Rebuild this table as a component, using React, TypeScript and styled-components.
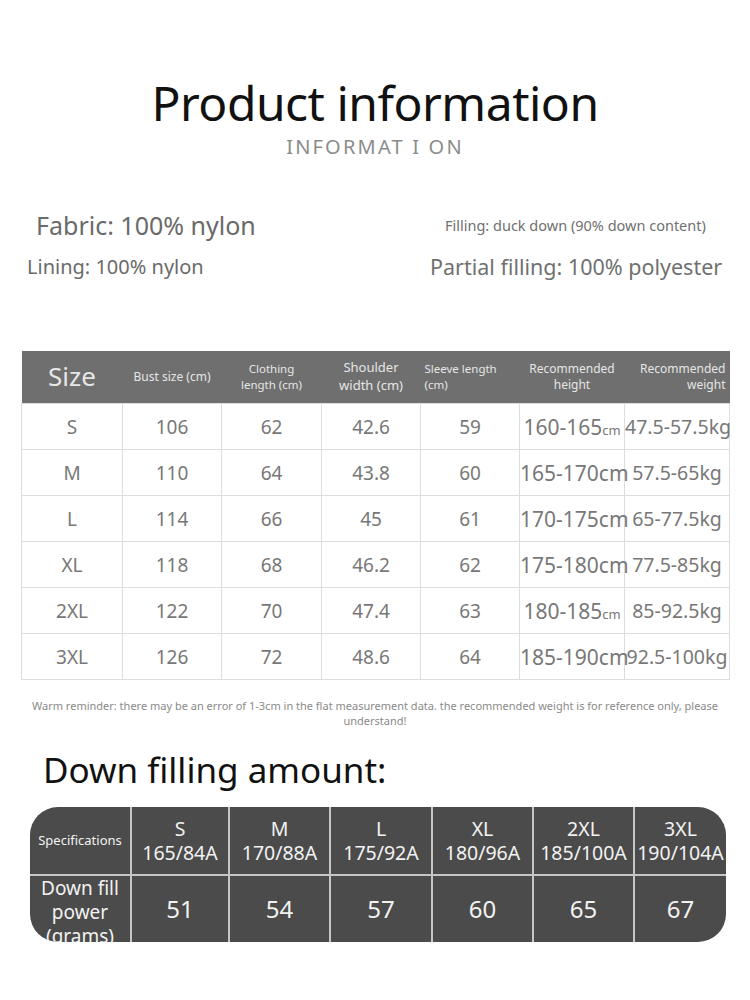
import React from 'react';
import styled, { createGlobalStyle } from 'styled-components';

const GlobalStyle = createGlobalStyle`
  body {
    margin: 0;
    background: #ffffff;
    font-family: 'Noto Sans', 'Open Sans', sans-serif;
  }
`;

const Page = styled.div`
  width: 750px;
  height: 1000px;
  overflow: hidden;
  background: #fff;
`;

const TitleBlock = styled.div`
  padding-top: 74px;
  text-align: center;
`;

const Title = styled.h1`
  margin: 0;
  font-size: 48px;
  line-height: 58px;
  font-weight: 400;
  color: #111;
  letter-spacing: -0.5px;
`;

const SubTitle = styled.div`
  margin-top: 3px;
  font-size: 20px;
  line-height: 24px;
  color: #8c8c8c;
  letter-spacing: 2.2px;
`;

const Materials = styled.div`
  display: grid;
  grid-template-columns: 1fr 1fr;
  row-gap: 18px;
  margin-top: 54px;
`;

const Material = styled.div<{ $size: number; $indent: number; $right?: boolean }>`
  font-size: ${({ $size }) => $size}px;
  line-height: 24px;
  color: ${({ $right }) => ($right ? '#707070' : '#6a6a6a')};
  padding-left: ${({ $indent }) => $indent}px;
  white-space: nowrap;
`;

const SizeTable = styled.table`
  margin: 72px 0 0 21px;
  width: 708px;
  border-collapse: collapse;
  table-layout: fixed;
`;

const HeadCell = styled.th<{ $size: number; $align?: string }>`
  height: 52px;
  padding: 0 4px;
  background: #6f6f6f;
  color: #e6e6e6;
  font-weight: 400;
  font-size: ${({ $size }) => $size}px;
  line-height: 1.35;
  text-align: ${({ $align }) => $align || 'center'};
`;

const BodyCell = styled.td<{ $size: number }>`
  height: 45px;
  padding: 0;
  border: 1px solid #dedede;
  color: #787878;
  font-size: ${({ $size }) => $size}px;
  text-align: center;
  white-space: nowrap;
  overflow: visible;
`;

const Small = styled.span`
  font-size: 13px;
`;

const Reminder = styled.p`
  margin: 18px 20px 0;
  font-size: 11px;
  line-height: 15px;
  color: #8a8a8a;
  text-align: center;
`;

const SectionTitle = styled.h2`
  margin: 19px 0 0 43px;
  font-size: 35px;
  line-height: 46px;
  font-weight: 400;
  color: #111;
`;

const FillGrid = styled.div`
  margin: 14px 0 0 30px;
  width: 696px;
  display: grid;
  grid-template-columns: 100px 98px 101px 102px 101px 101px 93px;
  grid-template-rows: 67px 68px;
  background: #4b4b4b;
  border-radius: 28px;
  overflow: hidden;
`;

const FillCell = styled.div<{ $size: number; $col: number; $row: number }>`
  display: flex;
  flex-direction: column;
  align-items: center;
  justify-content: center;
  text-align: center;
  color: #f2f2f2;
  font-size: ${({ $size }) => $size}px;
  line-height: 23.5px;
  white-space: nowrap;
  overflow: hidden;
  border-left: ${({ $col }) => ($col > 0 ? '2px solid #c6c6c6' : 'none')};
  border-top: ${({ $row }) => ($row > 0 ? '2px solid #c6c6c6' : 'none')};
`;

const ClippedLabel = styled.div`
  align-self: center;
  margin-top: -1px;
  line-height: 24px;
  font-size: 19px;
  height: 66px;
`;

const headers: { text: React.ReactNode; size: number; align?: string }[] = [
  { text: 'Size', size: 26 },
  { text: 'Bust size (cm)', size: 12 },
  { text: <>Clothing<br />length (cm)</>, size: 11.5 },
  { text: <>Shoulder<br />width (cm)</>, size: 13 },
  { text: <>Sleeve length<br />(cm)</>, size: 11.5, align: 'left' },
  { text: <>Recommended<br />height</>, size: 12 },
  { text: <>Recommended<br />weight</>, size: 12, align: 'right' },
];

const colWidths = [101, 99, 100, 99, 99, 105, 105];
const cellSizes = [19, 19, 19, 19, 19, 21, 19.5];

const rows: [string, string, string, string, string, React.ReactNode, string][] = [
  ['S', '106', '62', '42.6', '59', <>160-165<Small>cm</Small></>, '47.5-57.5kg'],
  ['M', '110', '64', '43.8', '60', '165-170cm', '57.5-65kg'],
  ['L', '114', '66', '45', '61', '170-175cm', '65-77.5kg'],
  ['XL', '118', '68', '46.2', '62', '175-180cm', '77.5-85kg'],
  ['2XL', '122', '70', '47.4', '63', <>180-185<Small>cm</Small></>, '85-92.5kg'],
  ['3XL', '126', '72', '48.6', '64', '185-190cm', '92.5-100kg'],
];

const specs = [
  ['S', '165/84A', '51'],
  ['M', '170/88A', '54'],
  ['L', '175/92A', '57'],
  ['XL', '180/96A', '60'],
  ['2XL', '185/100A', '65'],
  ['3XL', '190/104A', '67'],
];

const App = () => (
  <Page>
    <GlobalStyle />
    <TitleBlock>
      <Title>Product information</Title>
      <SubTitle>INFORMAT I ON</SubTitle>
    </TitleBlock>

    <Materials>
      <Material $size={25} $indent={36}>Fabric: 100% nylon</Material>
      <Material $size={14.5} $indent={70} $right>Filling: duck down (90% down content)</Material>
      <Material $size={20} $indent={27}>Lining: 100% nylon</Material>
      <Material $size={21.5} $indent={55} $right>Partial filling: 100% polyester</Material>
    </Materials>

    <SizeTable>
      <colgroup>
        {colWidths.map((w, i) => (
          <col key={i} style={{ width: w }} />
        ))}
      </colgroup>
      <thead>
        <tr>
          {headers.map((h, i) => (
            <HeadCell key={i} $size={h.size} $align={h.align}>
              {h.text}
            </HeadCell>
          ))}
        </tr>
      </thead>
      <tbody>
        {rows.map((r, i) => (
          <tr key={i}>
            {r.map((c, j) => (
              <BodyCell key={j} $size={cellSizes[j]}>
                {c}
              </BodyCell>
            ))}
          </tr>
        ))}
      </tbody>
    </SizeTable>

    <Reminder>
      Warm reminder: there may be an error of 1-3cm in the flat measurement data. the recommended weight is for reference only, please
      understand!
    </Reminder>

    <SectionTitle>Down filling amount:</SectionTitle>

    <FillGrid>
      <FillCell $size={13} $col={0} $row={0}>Specifications</FillCell>
      {specs.map((s, i) => (
        <FillCell key={s[0]} $size={19.5} $col={i + 1} $row={0}>
          <span>{s[0]}</span>
          <span>{s[1]}</span>
        </FillCell>
      ))}
      <FillCell $size={19} $col={0} $row={1}>
        <ClippedLabel>
          Down fill
          <br />
          power
          <br />
          (grams)
        </ClippedLabel>
      </FillCell>
      {specs.map((s, i) => (
        <FillCell key={s[2] + i} $size={24} $col={i + 1} $row={1}>
          {s[2]}
        </FillCell>
      ))}
    </FillGrid>
  </Page>
);

export default App;
